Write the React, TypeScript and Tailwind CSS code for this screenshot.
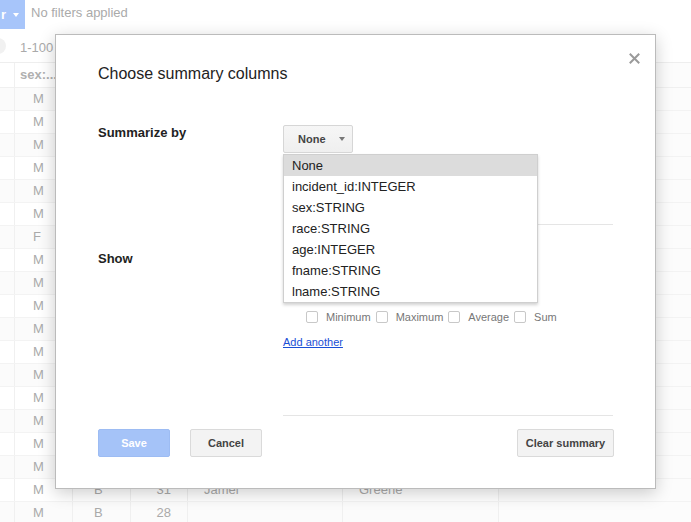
import React from "react";

const sexes = ["M","M","M","M","M","M","F","M","M","M","M","M","M","M","M","M","M","M","M"];
const rows = sexes.map((s, i) => ({
  sex: s,
  race: i >= 17 ? "B" : "",
  age: i === 17 ? "31" : i === 18 ? "28" : "",
  fname: i === 17 ? "Jamel" : "",
  lname: i === 17 ? "Greene" : "",
}));

function Checkbox({ label }: { label: string }) {
  return (
    <div className="flex items-center">
      <div className="w-[12px] h-[12px] border border-[#c8c8c8] rounded-[2px] bg-white" />
      <span className="ml-[8px] mr-[5px] text-[11px] leading-[14px] text-[#777]">{label}</span>
    </div>
  );
}

const menuItems = ["None", "incident_id:INTEGER", "sex:STRING", "race:STRING", "age:INTEGER", "fname:STRING", "lname:STRING"];

export default function App() {
  return (
    <div className="relative w-[691px] h-[522px] overflow-hidden bg-white font-['Liberation_Sans',Arial,sans-serif]">
      {/* top bar */}
      <div className="h-[34px] flex items-start">
        <div className="h-[29px] w-[25px] bg-[#a7c5fa] flex items-center overflow-hidden">
          <span className="text-white font-bold text-[13px] leading-none pl-[1px]">r</span>
          <div className="ml-[7px] w-0 h-0 border-l-[3px] border-r-[3px] border-t-[4px] border-l-transparent border-r-transparent border-t-white" />
        </div>
        <div className="ml-[6px] h-[25px] flex items-center text-[13px] text-[#aaa]">No filters applied</div>
      </div>
      {/* second bar */}
      <div className="h-[28px] flex items-center">
        <div className="w-[16px] h-[16px] rounded-full bg-[#f1f1f1] ml-[-10px] mt-[-4px]" />
        <span className="ml-[14px] text-[13px] text-[#aaa]">1-100</span>
      </div>
      {/* table */}
      <div className="border-t border-[#eeeeee]">
        <div className="grid grid-cols-[15px_58px_58px_57px_155px_156px_1fr] h-[25px] border-b border-[#f0f0f0] text-[13px] font-bold text-[#b0b0b0]">
          <div className="border-r border-[#f0f0f0]" />
          <div className="border-r border-[#f0f0f0] pl-[5px] flex items-center overflow-hidden whitespace-nowrap">sex:...</div>
          <div className="border-r border-[#f0f0f0]" />
          <div className="border-r border-[#f0f0f0]" />
          <div className="border-r border-[#f0f0f0]" />
          <div className="border-r border-[#f0f0f0]" />
          <div className="bg-[#fcfcfc]" />
        </div>
        {rows.map((r, i) => (
          <div
            key={i}
            className={`grid grid-cols-[15px_58px_58px_57px_155px_156px_1fr] h-[23px] border-b border-[#f3f3f3] text-[13px] text-[#aaa] ${i % 2 === 0 ? "bg-[#fbfbfb]" : "bg-white"}`}
          >
            <div className="border-r border-[#f0f0f0]" />
            <div className="border-r border-[#f0f0f0] flex items-center pl-[18px]">{r.sex}</div>
            <div className="border-r border-[#f0f0f0] flex items-center pl-[21px]">{r.race}</div>
            <div className="border-r border-[#f0f0f0] flex items-center justify-end pr-[16px]">{r.age}</div>
            <div className="border-r border-[#f0f0f0] flex items-center pl-[16px]">{r.fname}</div>
            <div className="border-r border-[#f0f0f0] flex items-center pl-[16px]">{r.lname}</div>
            <div className="bg-[#fcfcfc]" />
          </div>
        ))}
      </div>

      {/* dialog */}
      <div className="absolute left-[55px] top-[34px] w-[601px] h-[455px] bg-white border border-[#bbbbbb] shadow-[0_4px_16px_rgba(0,0,0,0.2)] pl-[42px] pr-[41px]">
        <button className="absolute top-[18px] right-[15px] w-[11px] h-[11px]" aria-label="Close">
          <svg width="11" height="11" viewBox="0 0 11 11">
            <path d="M1.5 1.5 L9.5 9.5 M9.5 1.5 L1.5 9.5" stroke="#9a9a9a" strokeWidth="2" strokeLinecap="square" />
          </svg>
        </button>
        <div className="pt-[29px] text-[16px] leading-[20px] text-[#222]">Choose summary columns</div>

        {/* Summarize by */}
        <div className="mt-[41px] flex">
          <div className="w-[185px] pt-[1px] text-[13px] leading-[14px] font-bold text-[#222]">Summarize by</div>
          <div className="w-[330px] pb-[71px] border-b border-[#e5e5e5]">
            <div className="relative w-[70px]">
              <div className="h-[28px] w-[70px] flex items-center border border-[#d6d6d6] rounded-[2px] bg-gradient-to-b from-[#f6f6f6] to-[#efefef] pl-[14px]">
                <span className="text-[11px] font-bold text-[#444]">None</span>
                <div className="ml-[13px] w-0 h-0 border-l-[3px] border-r-[3px] border-t-[4px] border-l-transparent border-r-transparent border-t-[#777]" />
              </div>
              <div className="absolute left-0 top-[29px] w-[255px] bg-white border border-[#cfcfcf] shadow-[0_2px_3px_rgba(0,0,0,0.18)] z-10">
                {menuItems.map((m, i) => (
                  <div
                    key={m}
                    className={`h-[21px] flex items-center pl-[8px] text-[13px] text-[#222] ${i === 0 ? "bg-[#dcdcdc]" : ""}`}
                  >
                    {m}
                  </div>
                ))}
              </div>
            </div>
          </div>
        </div>

        {/* Show */}
        <div className="flex">
          <div className="w-[185px] pt-[27px] text-[13px] leading-[14px] font-bold text-[#222]">Show</div>
          <div className="w-[330px] pt-[85px] pb-[66px] border-b border-[#e5e5e5]">
            <div className="flex items-center pl-[23px] h-[14px]">
              <Checkbox label="Minimum" />
              <Checkbox label="Maximum" />
              <Checkbox label="Average" />
              <Checkbox label="Sum" />
            </div>
            <div className="mt-[12px] h-[13px] flex items-center">
              <a className="text-[11px] leading-[13px] text-[#1a4fd6] underline">Add another</a>
            </div>
          </div>
        </div>

        {/* Footer */}
        <div className="mt-[13px] flex justify-between">
          <div className="flex gap-[20px]">
            <div className="w-[72px] h-[28px] flex items-center justify-center rounded-[2px] bg-[#a5c3f8] border border-[#9dbcf3] text-[11px] font-bold text-white">Save</div>
            <div className="w-[72px] h-[28px] flex items-center justify-center rounded-[2px] bg-[#f3f3f3] border border-[#dadada] text-[11px] font-bold text-[#444]">Cancel</div>
          </div>
          <div className="w-[97px] h-[28px] flex items-center justify-center rounded-[2px] bg-[#f3f3f3] border border-[#dadada] text-[11px] font-bold text-[#444]">Clear summary</div>
        </div>
      </div>
    </div>
  );
}
